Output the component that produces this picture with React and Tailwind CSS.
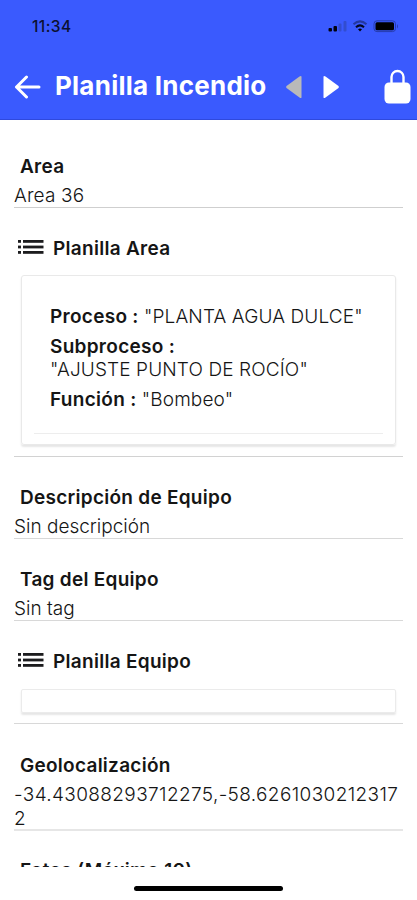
import React from 'react';

function ListIcon() {
  return (
    <svg width="26" height="16" viewBox="0 0 26 16" fill="#1c1c1e" className="-mt-[3px] shrink-0">
      <rect x="0" y="1" width="3" height="2.800" />
      <rect x="0" y="6.600" width="3" height="2.800" />
      <rect x="0" y="12" width="3" height="2.800" />
      <rect x="5" y="1" width="20.500" height="2.800" />
      <rect x="5" y="6.600" width="20.500" height="2.800" />
      <rect x="5" y="12" width="20.500" height="2.800" />
    </svg>
  );
}

function Label({ children }) {
  return <h2 className="ml-[6px] h-6 text-[19px] leading-[26px] font-semibold tracking-[0.27px] whitespace-nowrap text-[#151515]">{children}</h2>;
}

function Value({ children, className = '' }) {
  return <p className={'mt-[6px] text-[19px] leading-6 font-light break-all text-[#151515] ' + className}>{children}</p>;
}

function ListTitle({ children }) {
  return (
    <div className="ml-[4px] flex h-6 items-center">
      <ListIcon />
      <h2 className="ml-[9px] pt-[2px] text-[19px] leading-[22px] font-semibold tracking-[0.29px] text-[#151515]">{children}</h2>
    </div>
  );
}

export default function App() {
  return (
    <div className="flex h-[900px] w-[417px] flex-col overflow-hidden bg-white font-['Inter',sans-serif]">
      <header className="h-[120px] shrink-0 border-b border-[#2f49dd] bg-[#3a5afe]">
        <div className="flex h-[52px] items-center pt-px pr-[17px] pl-[32px]">
          <span className="text-[15.5px] font-medium tracking-[0.4px] text-[#0b1030]">11:34</span>
          <svg className="ml-auto" width="72" height="14" viewBox="0 0 72 14">
            <rect x="0.5" y="8" width="3.5" height="3.5" rx="1" fill="#02020e" />
            <rect x="5.5" y="6" width="3.5" height="5.5" rx="1" fill="#02020e" />
            <rect x="10.5" y="3.5" width="3" height="8" rx="1" fill="#324dcf" />
            <rect x="15.5" y="1" width="3" height="10.500" rx="1" fill="#324dcf" />
            <path d="M25.500 4.300Q32 -1.500 38.500 4.300" fill="none" stroke="#2438a0" strokeWidth="2" />
            <path d="M28 7.200Q32 3.500 36 7.200" fill="none" stroke="#050820" strokeWidth="2" />
            <path d="M30 9.200Q32 7.800 34 9.200L32 11.500Z" fill="#02020e" />
            <rect x="46" y="0.800" width="21.500" height="10.800" rx="3" fill="none" stroke="#263cae" strokeWidth="1" />
            <rect x="47.500" y="2.200" width="18.500" height="8" rx="1.500" fill="#000" />
            <path d="M69 4v4.500q2-2.200 0-4.500" fill="#263cae" />
          </svg>
        </div>
        <div className="flex h-[67px] items-center pt-[2px] pl-[14px]">
          <svg width="27" height="24" viewBox="0 0 27 24" fill="none" stroke="white" strokeWidth="3" strokeLinecap="round" strokeLinejoin="round">
            <path d="M12.500 2L2.500 12l10 10M2.500 12H25" />
          </svg>
          <h1 className="ml-[14px] w-[212px] pb-[2px] text-[26px] leading-8 font-bold tracking-[0.24px] whitespace-nowrap text-white">Planilla Incendio</h1>
          <svg className="ml-[19px]" width="16" height="24" viewBox="0 0 16 24"><path d="M15.500 1.500v21Q15 23.500 13.500 22.500L0.500 13Q-.2 12 .5 11L13.500 1.500Q15 .5 15.500 1.500Z" fill="#b9b9b9" /></svg>
          <svg className="ml-[21px]" width="17" height="24" viewBox="0 0 17 24"><path d="M.5 1.500v21Q1 23.500 2.500 22.500L15.500 13Q16.200 12 15.500 11L2.500 1.500Q1 .5 .5 1.500Z" fill="white" /></svg>
          <svg className="ml-[44px]" width="27" height="35" viewBox="0 0 27 35">
            <path d="M7.500 15V8a6 6 0 0 1 12 0v7" fill="none" stroke="white" strokeWidth="2.400" />
            <rect x="0.500" y="13.500" width="26" height="21" rx="4.500" fill="white" />
          </svg>
        </div>
      </header>

      <main className="h-[747px] shrink-0 overflow-hidden pt-[34px] pr-[14px] pl-[14px]">
        <section className="h-[54px] border-b border-[#cfcfcf]">
          <Label>Area</Label>
          <Value className="tracking-[0.15px]">Area 36</Value>
        </section>

        <section className="h-[249px] border-b border-[#d2d2d2] pt-[28px]">
          <ListTitle>Planilla Area</ListTitle>
          <div className="mt-[15px] mr-[7px] ml-[7px] h-[170px] rounded-[3px] border border-[#e9e9e9] px-[12px] pt-[29px] shadow-[0_2px_2px_rgba(0,0,0,0.1)]">
            <div className="h-[129px] border-b border-[#ededed] px-[16px] text-[19px] leading-6 font-light whitespace-nowrap text-[#151515]">
              <p><b className="font-semibold tracking-[0.29px]">Proceso :</b> <span className="tracking-[0.12px]">"PLANTA AGUA DULCE"</span></p>
              <p className="mt-[6px]"><b className="font-semibold tracking-[0.29px]">Subproceso :</b></p>
              <p className="-mt-px tracking-[0.12px]">"AJUSTE PUNTO DE ROCÍO"</p>
              <p className="mt-[6px]"><b className="font-semibold tracking-[0.29px]">Función :</b> <span className="tracking-[0.12px]">"Bombeo"</span></p>
            </div>
          </div>
        </section>

        <section className="h-[82px] border-b border-[#d8d8d8] pt-[28px]">
          <Label>Descripción de Equipo</Label>
          <Value>Sin descripción</Value>
        </section>

        <section className="h-[82px] border-b border-[#d8d8d8] pt-[28px]">
          <Label>Tag del Equipo</Label>
          <Value>Sin tag</Value>
        </section>

        <section className="h-[103px] border-b border-[#d8d8d8] pt-[28px]">
          <ListTitle>Planilla Equipo</ListTitle>
          <div className="mt-[16px] mr-[7px] ml-[7px] h-[24px] rounded-[2px] border border-[#ebebeb] shadow-[0_2px_2px_rgba(0,0,0,0.1)]" />
        </section>

        <section className="h-[107px] border-b-2 border-[#e6e6e6] pt-[29px]">
          <Label>Geolocalización</Label>
          <Value className="tracking-[0.37px]">-34.43088293712275,-58.62610302123172</Value>
        </section>

        <section className="pt-[27px]">
          <Label>Fotos (Máximo 10)</Label>
        </section>
      </main>

      <footer className="flex h-[33px] shrink-0 justify-center bg-white pt-[19px]">
        <div className="h-[5px] w-[149px] rounded-full bg-black" />
      </footer>
    </div>
  );
}
